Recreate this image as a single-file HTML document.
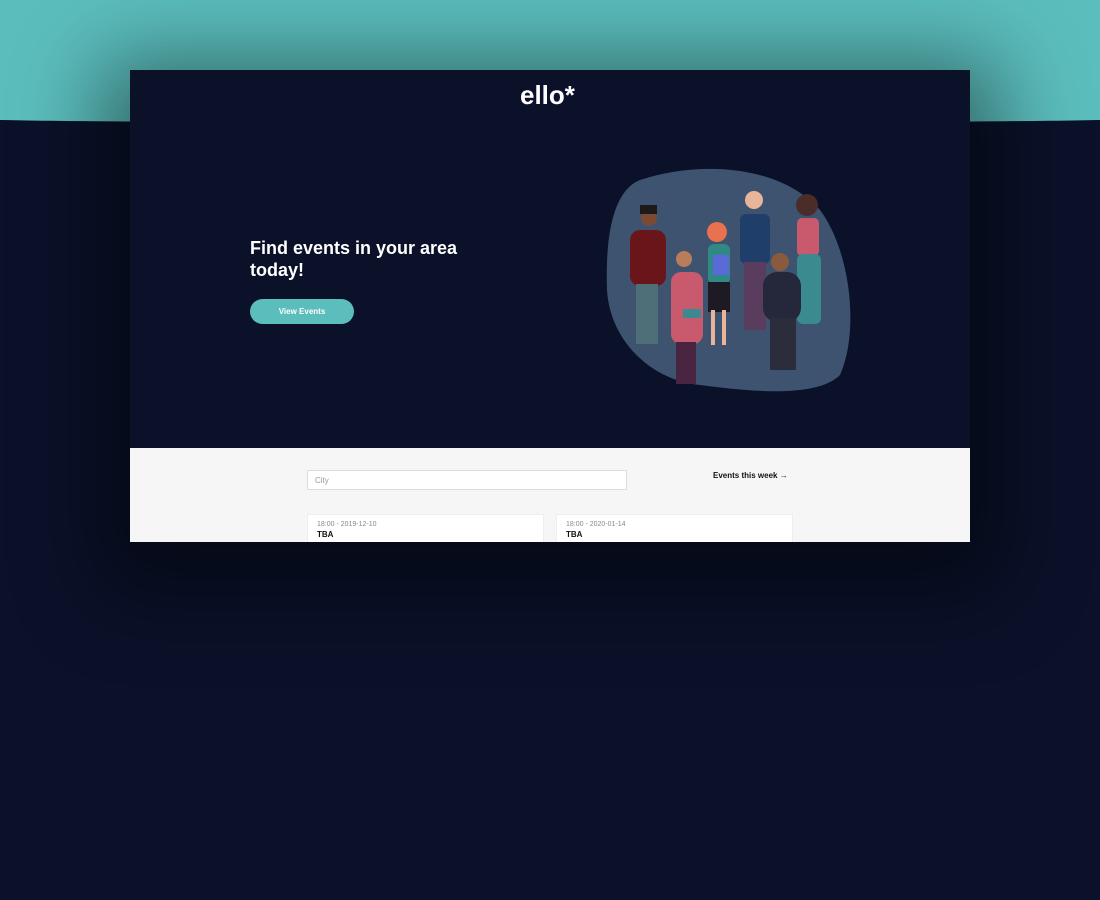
<!DOCTYPE html>
<html><head><meta charset="utf-8"><style>
*{margin:0;padding:0;box-sizing:border-box}
body{width:1100px;height:900px;overflow:hidden;background:#0a1129;font-family:"Liberation Sans",sans-serif;position:relative}
.teal{position:absolute;left:-50px;top:-197px;width:1200px;height:320px;background:#5bbebd;border-radius:0 0 50% 50%/0 0 5px 5px}
.card{position:absolute;left:130px;top:70px;width:840px;height:472px;background:#0a1129;overflow:hidden;box-shadow:0 20px 80px 30px rgba(0,0,0,0.45)}
.logo{position:absolute;left:390px;top:10px;color:#fff;font-weight:bold;font-size:26px;letter-spacing:0}
h1{position:absolute;left:120px;top:167px;color:#fff;font-size:18px;line-height:22px;font-weight:bold}
.btn{position:absolute;left:120px;top:229px;width:104px;height:25px;border-radius:13px;background:#5bbebd;color:#fff;font-size:8px;font-weight:bold;text-align:center;line-height:25px}
.low{position:absolute;left:0;top:378px;width:840px;height:94px;background:#f6f6f6}
.inp{position:absolute;left:177px;top:22px;width:320px;height:20px;background:#fff;border:1px solid #ddd;border-radius:2px;font-size:8px;color:#999;padding:5px 7px}
.ew{position:absolute;left:583px;top:23px;font-size:8px;font-weight:bold;color:#111}
.ev{position:absolute;top:66px;width:237px;height:40px;background:#fff;border:1px solid #eee;padding:6px 9px;font-size:7px;color:#888}
.ev b{display:block;color:#111;font-size:8px;margin-top:2px}
</style></head><body>
<div class="teal"></div>
<div class="card">
<div class="logo">ello*</div>
<h1>Find events in your area<br>today!</h1>
<div class="btn">View Events</div>
<svg style="position:absolute;left:470px;top:95px" width="260" height="230" viewBox="600 165 260 230">
<path d="M640 180 C700 160 780 165 820 210 C850 250 860 330 840 375 C815 400 740 390 700 385 C650 380 610 340 607 290 C605 230 615 190 640 180Z" fill="#3d5370"/>
<rect x="630" y="230" width="36" height="56" rx="10" fill="#6a1519"/>
<rect x="636" y="284" width="22" height="60" fill="#4e6f78"/>
<circle cx="649" cy="218" r="8" fill="#7a4a35"/><rect x="640" y="205" width="17" height="9" fill="#1f1a1a"/>
<rect x="671" y="272" width="32" height="72" rx="10" fill="#c95a6d"/>
<rect x="676" y="342" width="20" height="42" fill="#4a2541"/>
<circle cx="684" cy="259" r="8" fill="#b97c5c"/>
<rect x="683" y="309" width="18" height="9" fill="#3b8a90"/>
<circle cx="717" cy="232" r="10" fill="#e8714f"/>
<rect x="708" y="244" width="22" height="40" rx="6" fill="#2f8a86"/>
<rect x="708" y="282" width="22" height="30" fill="#1d1a24"/>
<rect x="711" y="310" width="4" height="35" fill="#e9b59a"/><rect x="722" y="310" width="4" height="35" fill="#e9b59a"/>
<rect x="713" y="255" width="16" height="20" fill="#5a6ad6"/>
<circle cx="754" cy="200" r="9" fill="#e9b59a"/>
<rect x="740" y="214" width="30" height="50" rx="6" fill="#1f3f6a"/>
<rect x="744" y="262" width="22" height="68" fill="#5a3c5e"/>
<circle cx="807" cy="205" r="11" fill="#4a2c28"/>
<rect x="797" y="218" width="22" height="38" rx="5" fill="#c95a6d"/>
<rect x="797" y="254" width="24" height="70" rx="6" fill="#3b8a90"/>
<circle cx="780" cy="262" r="9" fill="#8a5a3e"/>
<rect x="763" y="272" width="38" height="50" rx="14" fill="#25283a"/>
<rect x="770" y="318" width="26" height="52" fill="#2b2d3d"/>
</svg>
<div class="low">
<div class="inp">City</div>
<div class="ew">Events this week →</div>
<div class="ev" style="left:177px">18:00 - 2019-12-10<b>TBA</b></div>
<div class="ev" style="left:426px">18:00 - 2020-01-14<b>TBA</b></div>
</div>
</div>
</body></html>
